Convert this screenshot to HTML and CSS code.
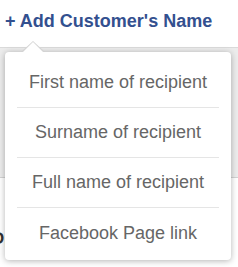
FILE: index.html
```html
<!DOCTYPE html>
<html lang="en">
<head>
    <meta charset="UTF-8">
    <meta name="viewport" content="width=device-width, initial-scale=1.0">
    <title>Add Customer's Name</title>
    <link rel="stylesheet" href="styles.css">
</head>
<body>
    <div class="page">
        <a class="add-name" href="#">+ Add Customer's Name</a>
        <div class="band"></div>
        <div class="next-row">
            <span class="next-label">Op</span>
        </div>

        <div class="popover">
            <ul class="name-menu">
                <li>First name of recipient</li>
                <li>Surname of recipient</li>
                <li>Full name of recipient</li>
                <li>Facebook Page link</li>
            </ul>
        </div>
    </div>
</body>
</html>
```

FILE: styles.css
```css
* {
    box-sizing: border-box;
    margin: 0;
    padding: 0;
}

body {
    background-color: #fff;
    font-family: "Liberation Sans", Arial, Helvetica, sans-serif;
}

.page {
    position: relative;
    width: 238px;
    height: 267px;
    overflow: hidden;
}

.add-name {
    display: block;
    padding: 11px 5px 15px;
    font-size: 18px;
    line-height: 21px;
    font-weight: 700;
    color: #33508f;
    text-decoration: none;
}

.band {
    height: 131px;
    border-top: 1px solid #dadada;
    border-bottom: 1px solid #d2d2d2;
    background-color: #ececec;
}

.next-row {
    padding-top: 51px;
}

.next-label {
    display: block;
    margin-left: -9px;
    font-size: 17px;
    font-weight: 700;
    color: #333;
}

.popover {
    position: absolute;
    left: 5px;
    top: 52px;
    width: 226px;
    padding: 6px 12px 2px;

    background-color: #fff;
    border-radius: 4px;
    box-shadow: 0 1px 6px rgba(0, 0, 0, .3);
}

.popover::before,
.popover::after {
    content: "";
    position: absolute;
    left: 16px;
    width: 0;
    height: 0;
    border-left: 12px solid transparent;
    border-right: 12px solid transparent;
}

.popover::before {
    top: -11px;
    border-bottom: 11px solid #d4d4d4;
}

.popover::after {
    top: -10px;
    left: 17px;
    border-left-width: 11px;
    border-right-width: 11px;
    border-bottom: 11px solid #fff;
}

.name-menu {
    list-style: none;
}

.name-menu li {
    height: 50px;
    display: flex;
    align-items: center;
    justify-content: center;

    font-size: 18px;
    color: #666;
    border-bottom: 1px solid #e5e5e5;
    cursor: pointer;
}

.name-menu li:last-child {
    border-bottom: none;
}
```
